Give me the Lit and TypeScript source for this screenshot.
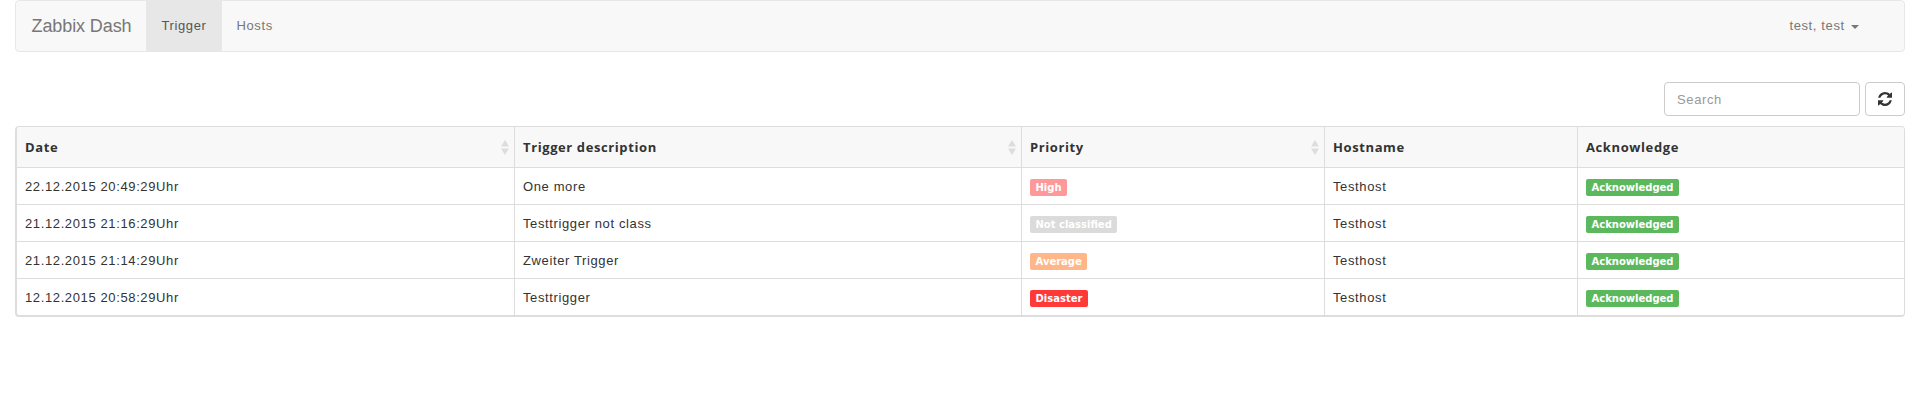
import { LitElement, html, css } from "lit";
import { customElement } from "lit/decorators.js";

const rows = [
  ["22.12.2015 20:49:29Uhr", "One more", "High", "high"],
  ["21.12.2015 21:16:29Uhr", "Testtrigger not class", "Not classified", "nc"],
  ["21.12.2015 21:14:29Uhr", "Zweiter Trigger", "Average", "avg"],
  ["12.12.2015 20:58:29Uhr", "Testtrigger", "Disaster", "dis"],
];

const sort = html`<svg class="sort" width="8" height="15" viewBox="0 0 8 15"><path d="M4 0L8 6.5H0z" fill="#ddd"/><path d="M4 15L0 8.5H8z" fill="#ddd"/></svg>`;

@customElement("app-root")
export class AppRoot extends LitElement {
  static styles = css`
    :host { display: block; font-family: "Liberation Sans", Arial, sans-serif; font-size: 13px; color: #333; letter-spacing: 0.62px; padding: 0 12px 0 15px; }
    nav { display: flex; align-items: stretch; height: 50px; background: #f8f8f8; border: 1px solid #e7e7e7; border-radius: 4px; margin-bottom: 30px; }
    .brand { font-size: 18px; letter-spacing: -0.1px; color: #777; padding: 0 15px 0 15.5px; line-height: 50px; }
    .item { color: #777; padding: 0 15px; line-height: 50px; }
    .item.active { background: #e7e7e7; color: #555; }
    .spacer { flex: 1; }
    .user { padding-right: 45px; }
    .caret { display: inline-block; border-top: 4px solid #777; border-left: 4px solid transparent; border-right: 4px solid transparent; vertical-align: middle; margin-left: 2px; }
    .tools { display: flex; justify-content: flex-end; gap: 5px; margin-bottom: 10px; }
    .search { box-sizing: border-box; width: 196px; height: 34px; border: 1px solid #ccc; border-radius: 4px; padding: 0 12px; line-height: 34px; color: #999; }
    .refresh { box-sizing: border-box; width: 40px; height: 34px; border: 1px solid #ccc; border-radius: 4px; display: flex; align-items: center; justify-content: center; }
    .wrap { border: 1px solid #ddd; border-bottom-width: 2px; border-left-width: 2px; border-radius: 4px; overflow: hidden; }
    table { width: 100%; border-collapse: separate; border-spacing: 0; table-layout: fixed; }
    th { height: 41px; box-sizing: border-box; padding: 0 8px; background: #f8f8f8; text-align: left; font-family: "Open Sans", sans-serif; font-size: 13px; font-weight: 700; letter-spacing: 0.6px; position: relative; border-bottom: 1px solid #ddd; }
    td { height: 37px; box-sizing: border-box; padding: 0 8px; border-bottom: 1px solid #ddd; color: #333; }
    tr:last-child td { height: 36px; border-bottom: 0; }
    th + th, td + td { border-left: 1px solid #ddd; }
    .sort { position: absolute; right: 5px; top: 13px; }
    .label { display: inline-block; position: relative; top: 1px; font-family: "DejaVu Sans", sans-serif; font-size: 10px; font-weight: 700; color: #fff; padding: 2px 5.5px; border-radius: 2px; line-height: 13px; letter-spacing: 0; vertical-align: middle; }
    .high { background: #ff9999; }
    .nc { background: #dbdbdb; }
    .avg { background: #ffb689; }
    .dis { background: #ff3838; }
    .ack { background: #5cb85c; }
    col.c1 { width: 497px; } col.c2 { width: 507px; } col.c3 { width: 303px; } col.c4 { width: 253px; }
  `;

  render() {
    return html`
      <nav>
        <div class="brand">Zabbix Dash</div>
        <div class="item active">Trigger</div>
        <div class="item">Hosts</div>
        <div class="spacer"></div>
        <div class="item user">test, test <span class="caret"></span></div>
      </nav>
      <div class="tools">
        <div class="search">Search</div>
        <div class="refresh">
          <svg width="14" height="14" viewBox="0 0 1536 1536"><path fill="#333" d="M1511 928q0 5-1 7-64 268-268 434.500t-478 166.500q-146 0-282.500-55t-243.500-157l-129 129q-19 19-45 19t-45-19-19-45v-448q0-26 19-45t45-19h448q26 0 45 19t19 45-19 45l-137 137q71 66 161 102t187 36q134 0 250-65t186-179q11-17 53-117 8-23 30-23h192q13 0 22.500 9.500t9.500 22.500zm25-800v448q0 26-19 45t-45 19h-448q-26 0-45-19t-19-45 19-45l138-138q-148-137-349-137-134 0-250 65t-186 179q-11 17-53 117-8 23-30 23h-199q-13 0-22.500-9.500t-9.500-22.500v-7q65-268 270-434.500t480-166.500q146 0 284 55.500t245 156.500l130-129q19-19 45-19t45 19 19 45z"/></svg>
        </div>
      </div>
      <div class="wrap">
        <table>
          <colgroup><col class="c1"/><col class="c2"/><col class="c3"/><col class="c4"/><col/></colgroup>
          <thead><tr>
            <th>Date${sort}</th><th>Trigger description${sort}</th><th>Priority${sort}</th><th>Hostname</th><th>Acknowledge</th>
          </tr></thead>
          <tbody>
            ${rows.map((r) => html`<tr>
              <td>${r[0]}</td><td>${r[1]}</td>
              <td><span class="label ${r[3]}">${r[2]}</span></td>
              <td>Testhost</td>
              <td><span class="label ack">Acknowledged</span></td>
            </tr>`)}
          </tbody>
        </table>
      </div>
    `;
  }
}
